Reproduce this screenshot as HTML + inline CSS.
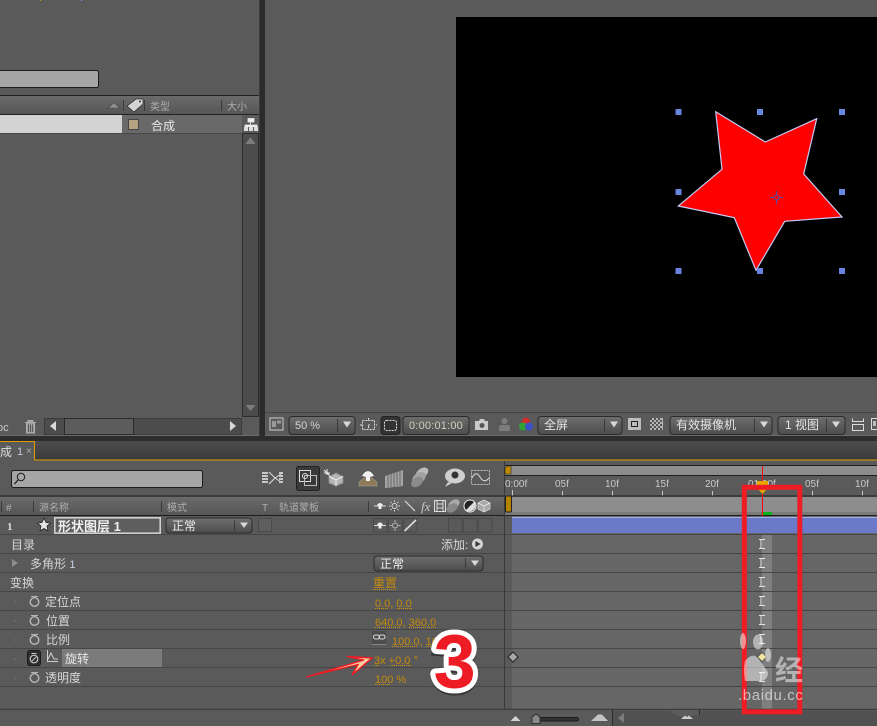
<!DOCTYPE html>
<html><head><meta charset="utf-8">
<style>
html,body{margin:0;padding:0;background:#5a5a5a;width:877px;height:726px;overflow:hidden}
svg{display:block}
text{font-family:"Liberation Sans","WenQuanYi Zen Hei","Noto Sans CJK SC",sans-serif;font-size:12px;fill:#d6d6d6}
.h{font-size:10px;fill:#aeaeae}
.o{fill:#c48a0c}
.r{font-size:10px;fill:#c9c9c9}
.u{stroke:#d09500;stroke-width:1;stroke-dasharray:1 1;fill:none}
.ln{stroke:#464646;stroke-width:1}
.dd{fill:url(#btn);stroke:#2a2a2a;stroke-width:1}
.sep{stroke:#3a3a3a;stroke-width:1}
.tri{fill:#d8d8d8}
.ic{fill:none;stroke:#dcdcdc;stroke-width:1}
.sw{fill:none;stroke:#4a4a4a;stroke-width:1}
</style></head><body>
<svg width="877" height="726" viewBox="0 0 877 726" xmlns="http://www.w3.org/2000/svg">
<defs>
<linearGradient id="btn" x1="0" y1="0" x2="0" y2="1"><stop offset="0" stop-color="#6e6e6e"/><stop offset="1" stop-color="#4c4c4c"/></linearGradient>
<linearGradient id="hd" x1="0" y1="0" x2="0" y2="1"><stop offset="0" stop-color="#6b6b6b"/><stop offset="1" stop-color="#565656"/></linearGradient>
<linearGradient id="tab" x1="0" y1="0" x2="0" y2="1"><stop offset="0" stop-color="#4d4d4d"/><stop offset="1" stop-color="#3b3b3b"/></linearGradient>
<clipPath id="wm"><rect x="730" y="630" width="73" height="56"/></clipPath>
<clipPath id="wm2"><rect x="730" y="680" width="76" height="30"/></clipPath>
</defs>

<rect width="877" height="726" fill="#5a5a5a"/>
<rect x="40" y="0" width="1" height="1" fill="#d09500"/><rect x="81" y="0" width="1" height="1" fill="#7d9cff"/>

<!-- project panel -->
<rect x="-3" y="70.500" width="101.500" height="17" rx="2" fill="#a6a6a6" stroke="#1c1c1c"/>
<rect x="0" y="96" width="259" height="18" fill="url(#hd)"/>
<path d="M0 95.500H259M0 114.500H259" stroke="#222"/>
<path d="M108 108L114 102.500L120 108Z" fill="#8f8f8f" stroke="#444" stroke-width=".6"/>
<path d="M123.500 100V111M144.500 100V111M221.500 100V111" class="sep"/>
<path d="M127 106L136 99H143V104L134 112Z" fill="#d4d4d4" stroke="#333" stroke-width=".8"/>
<circle cx="140" cy="101.500" r="1" fill="#333"/>
<text x="150" y="110" class="h">类型</text>
<text x="227" y="110" class="h">大小</text>
<rect x="0" y="115" width="122" height="18" fill="#d3d3d3"/>
<rect x="122" y="115" width="120" height="18" fill="#696969"/>
<path d="M0 133.500H242" stroke="#484848"/>
<rect x="128.500" y="119.500" width="10" height="10" fill="#b6a381" stroke="#444"/>
<text x="151" y="130" style="font-size:12px;fill:#e8e8e8">合成</text>
<!-- flowchart -->
<path d="M248 118.500H254V122H248ZM250.500 122V125M245 127V125H257V127" fill="#eee" stroke="#eee" stroke-width=".8"/>
<path d="M244 127h4v4h-4zM249 127h4v4h-4zM254 127h4v4h-4z" fill="#ddd"/>
<!-- scrollbar -->
<rect x="242.500" y="133.500" width="16" height="283" fill="#4c4c4c" stroke="#2c2c2c"/>
<path d="M245.500 144L250.500 137L255.500 144Z" fill="#7c7c7c"/>
<path d="M245.500 405L250.500 411L255.500 405Z" fill="#7c7c7c"/>
<rect x="0" y="418" width="259" height="17" fill="#5a5a5a"/>
<rect x="44.500" y="418.500" width="197" height="16" fill="#4c4c4c" stroke="#3a3a3a"/>
<rect x="64.500" y="418.500" width="69" height="16" fill="#5c5c5c" stroke="#2a2a2a"/>
<path d="M56 421V431L50 426Z" fill="#d8d8d8"/>
<path d="M230 421V431L236 426Z" fill="#d8d8d8"/>
<text x="-3" y="431" style="font-size:11px;fill:#c9c9c9">oc</text>
<path d="M25 422.500H36M28 422V420.500H33V422M26.500 423V433H34.500V423" fill="#9c9c9c" stroke="#b0b0b0"/>
<path d="M28.500 424.500V432M30.500 424.500V432M32.500 424.500V432" stroke="#5a5a5a"/>
<path d="M0 435.500H259" stroke="#6c6c6c"/>

<!-- dividers -->
<rect x="260" y="0" width="5" height="436" fill="#2b2b2b"/>
<rect x="259" y="0" width="1" height="436" fill="#3c3c3c"/>
<rect x="0" y="436" width="877" height="5" fill="#2d2d2d"/>

<!-- viewer -->
<rect x="456" y="17" width="421" height="360" fill="#000"/>
<path d="M265 412.500H877" stroke="#444"/>
<path d="M265 435.500H877" stroke="#6a6a6a"/>
<polygon points="715.700,111.700 765.300,142 816.700,118.700 803.700,174 842,217 784.700,221.300 756,270.300 734.300,217.700 678.300,206 722,169.300" fill="#fe0000" stroke="#c4cbf5" stroke-width="1.200"/>
<g fill="#6a82e0">
<rect x="675.500" y="109" width="6" height="6"/><rect x="757" y="109" width="6" height="6"/><rect x="839" y="109" width="6" height="6"/>
<rect x="675.500" y="189" width="6" height="6"/><rect x="839" y="189" width="6" height="6"/>
<rect x="675.500" y="268" width="6" height="6"/><rect x="757" y="268" width="6" height="6"/><rect x="839" y="268" width="6" height="6"/>
</g>
<g fill="none" stroke="#5050b0"><circle cx="776.500" cy="197.500" r="2.500"/><path d="M776.500 191V195M776.500 200V204M770 197.500H774M779 197.500H783"/></g>

<!-- viewer controls -->
<rect x="270" y="418" width="13" height="12" fill="none" stroke="#ccc"/><rect x="272" y="421" width="4" height="6" fill="#999"/><rect x="277" y="420.500" width="4" height="3" fill="#999"/>
<rect x="289" y="416.500" width="66" height="18" rx="3" class="dd"/><path d="M337.500 419V432" class="sep"/>
<text x="295" y="429" style="font-size:11px;fill:#d2d2d2">50 %</text>
<path d="M343 421.500H351L347 427.500Z" class="tri"/>
<rect x="362.500" y="420.500" width="12" height="9" class="ic" stroke-dasharray="2 1"/><path d="M368.500 418V432M360 425H377" stroke="#ddd" stroke-width="1" stroke-dasharray="2 6"/>
<rect x="381" y="416.500" width="19" height="18" rx="3" fill="#333" stroke="#222"/>
<rect x="384.500" y="420.500" width="12" height="10" rx="2" fill="none" stroke="#ddd" stroke-dasharray="2 1"/>
<rect x="403" y="416.500" width="66" height="18" rx="3" class="dd"/>
<text x="409" y="429" style="font-size:11px;fill:#d6d0be;letter-spacing:.2px">0:00:01:00</text>
<path d="M475 421H479L480 419H484L485 421H488V430H475Z" fill="#c9c9c9"/><circle cx="482" cy="425.500" r="2.500" fill="#555"/>
<circle cx="504.500" cy="421" r="3" fill="#7d7d7d"/><path d="M499 431V427Q499 425 502 425H507Q510 425 510 427V431Z" fill="#7d7d7d"/>
<circle cx="526" cy="421.500" r="4" fill="#d02c2c"/><circle cx="523" cy="426.500" r="4" fill="#33a033"/><circle cx="529" cy="426.500" r="4" fill="#3a52c8"/>
<rect x="538" y="416.500" width="84" height="18" rx="3" class="dd"/><path d="M604.500 419V432" class="sep"/>
<text x="544" y="429" style="fill:#e4e4e4">全屏</text><path d="M610 421.500H618L614 427.500Z" class="tri"/>
<rect x="628" y="418" width="13" height="12" fill="#bcbcbc"/><rect x="631.500" y="421.500" width="6" height="5" fill="none" stroke="#222"/>
<rect x="650" y="418" width="13" height="12" fill="#b5b5b5"/><path d="M650 418h2v2h-2zM654 418h2v2h-2zM658 418h2v2h-2zM652 420h2v2h-2zM656 420h2v2h-2zM660 420h2v2h-2zM650 422h2v2h-2zM654 422h2v2h-2zM658 422h2v2h-2zM652 424h2v2h-2zM656 424h2v2h-2zM660 424h2v2h-2zM650 426h2v2h-2zM654 426h2v2h-2zM658 426h2v2h-2zM652 428h2v2h-2zM656 428h2v2h-2zM660 428h2v2h-2z" fill="#555"/>
<rect x="670" y="416.500" width="102" height="18" rx="3" class="dd"/><path d="M754.500 419V432" class="sep"/>
<text x="676" y="429" style="fill:#e4e4e4">有效摄像机</text><path d="M760 421.500H768L764 427.500Z" class="tri"/>
<rect x="778" y="416.500" width="67" height="18" rx="3" class="dd"/><path d="M826.500 419V432" class="sep"/>
<text x="785" y="429" style="fill:#e4e4e4">1 视图</text><path d="M832 421.500H840L836 427.500Z" class="tri"/>
<path d="M852.500 418.500V421.500H863.500V418.500M852.500 430.500H863.500V424.500H852.500Z" class="ic"/>
<rect x="871.500" y="418.500" width="10" height="11" class="ic"/><rect x="873" y="421" width="3" height="5" fill="#bbb"/>

<!-- timeline tabs -->
<rect x="35" y="441" width="842" height="19" fill="url(#tab)"/>
<path d="M0 441.500H34.500V460H877" fill="none" stroke="#e09b00" stroke-width="1"/>
<rect x="0" y="442" width="34" height="19" fill="#5a5a5a"/>
<text x="0" y="456" style="fill:#dedede">成</text>
<text x="17" y="455" style="font-size:11px;fill:#c8c8d8">1</text>
<text x="26" y="454" style="font-size:10px;fill:#b4b4b4">×</text>

<!-- search -->
<rect x="11.500" y="470.500" width="191" height="17" rx="2" fill="#a6a6a6" stroke="#1c1c1c"/>
<circle cx="21" cy="477" r="3.700" fill="none" stroke="#1c1c1c"/><path d="M18 480L14.500 484" stroke="#1c1c1c" stroke-width="1.300"/>

<!-- toolbar icons -->
<g>
<path d="M269 472L275 478L281 474M269 484L275 478L281 482" fill="none" stroke="#dcdcdc"/>
<path d="M262 472h6v2h-6zM262 475h6v2h-6zM262 478h6v2h-6zM262 481h6v2h-6zM279 472h4v2h-4zM279 475h4v2h-4zM279 478h4v2h-4zM279 481h4v2h-4z" fill="#c8c8c8"/>
<rect x="296.500" y="466.500" width="23" height="24" rx="2" fill="#3a3a3a" stroke="#222"/>
<rect x="299.500" y="470.500" width="11" height="11" class="ic"/><rect x="304.500" y="475.500" width="12" height="10" fill="none" stroke="#bbb"/><circle cx="305" cy="476" r="2.500" class="ic"/>
<path d="M324 470L330 476M327 469V475M324 473H330" stroke="#eee"/>
<path d="M336 473L343 476.500V483L336 486L329 483V476.500Z" fill="#b5b5b5" stroke="#888"/><path d="M329 476.500L336 480L343 476.500M336 480V486" fill="none" stroke="#eee"/>
<path d="M359 482L364 478H372L377 482V486H359Z" fill="#8f7a55" stroke="#aaa" stroke-width=".5"/>
<path d="M362 476Q368 466 374 476L370 477V481H366V477Z" fill="#f0f0f0"/>
<path d="M385 476L403 470V486L385 488Z" fill="#a4a4a4"/><path d="M388 475V487M391 474V487M394 473V487M397 472V486M400 471V486" stroke="#5a5a5a" stroke-width=".8"/>
<ellipse cx="422" cy="473" rx="7" ry="4.500" transform="rotate(-35 422 473)" fill="#bbb"/><ellipse cx="419" cy="478" rx="7.500" ry="5" transform="rotate(-35 419 478)" fill="#a2a2a2"/><ellipse cx="417" cy="482" rx="6.500" ry="4.500" transform="rotate(-35 417 482)" fill="#8a8a8a"/>
<ellipse cx="455" cy="476" rx="10" ry="7.500" fill="#cfcfcf"/><circle cx="455" cy="475" r="3.500" fill="#333"/><path d="M448 482L445 487L452 483Z" fill="#cfcfcf"/>
<rect x="471.500" y="470.500" width="18" height="14" fill="none" stroke="#bdbdbd" stroke-dasharray="2 1"/><path d="M472 478Q476 470 480 477T489 478" class="ic"/>
</g>

<!-- header -->
<rect x="0" y="497" width="504" height="18" fill="url(#hd)"/>
<path d="M0 496H877M0 515.500H877" stroke="#1e1e1e"/>
<path d="M1.500 501V512M33.500 501V512M161.500 501V512M368.500 501V512" class="sep"/>
<text x="6" y="511" class="h">#</text>
<text x="39" y="511" class="h">源名称</text>
<text x="167" y="511" class="h">模式</text>
<text x="262" y="511" class="h">T</text>
<text x="279" y="511" class="h">轨道蒙板</text>
<path d="M374 506H386" stroke="#ddd"/><path d="M377 505Q380 501 383 505L381.500 506V509H378.500V506Z" fill="#eee"/>
<circle cx="394.500" cy="506" r="2.500" class="ic"/><path d="M394.500 500.500V502M394.500 510V511.500M389 506H390.500M398.500 506H400M390.500 502L391.500 503M397.500 509L398.500 510M390.500 510L391.500 509M397.500 503L398.500 502" stroke="#ddd"/>
<path d="M405 501L415 511" stroke="#ccc" stroke-width="1.300"/>
<text x="421" y="511" style="font:italic 13px 'Liberation Serif',serif;fill:#c8c8c8">fx</text>
<rect x="434.500" y="500.500" width="11" height="11" class="ic"/><path d="M437 500V512M443 500V512M437 504H443M437 508H443" stroke="#ddd"/>
<ellipse cx="454" cy="504" rx="6" ry="4" transform="rotate(-30 454 504)" fill="#aaa"/><ellipse cx="452" cy="508" rx="6" ry="4" transform="rotate(-30 452 508)" fill="#888"/>
<circle cx="470" cy="506" r="6" fill="#222" stroke="#eee"/><path d="M474.200 501.800A6 6 0 0 1 465.800 510.200Z" fill="#ddd"/>
<path d="M484 500L490 503V509L484 512L478 509V503Z" fill="#a8a8a8" stroke="#ddd" stroke-width=".7"/><path d="M478 503L484 506L490 503M484 506V512" fill="none" stroke="#eee" stroke-width=".7"/>

<!-- row area -->
<rect x="512" y="516" width="365" height="193" fill="#666"/>
<rect x="504" y="516" width="8" height="193" fill="#5a5a5a"/>
<rect x="762" y="534" width="10" height="175" fill="#7f7f7f"/>
<path class="ln" d="M0 534.500H877M0 553.500H877M0 572.500H877M0 591.500H877M0 610.500H877M0 629.500H877M0 648.500H877M0 667.500H877M0 686.500H877"/>
<path d="M504.500 461V709" stroke="#3a3a3a"/>
<path d="M0 709.500H877" stroke="#3c3c3c" stroke-width="1.500"/>

<!-- ruler -->
<rect x="505" y="466" width="372" height="9" fill="#8d8d8d"/>
<path d="M505 470Q505 466 509 466H511V474H505Z" fill="#c08a00" stroke="#222" stroke-width=".6"/>
<path d="M505 465.500H877M505 475.500H877" stroke="#1e1e1e"/>
<rect x="505" y="476" width="372" height="20" fill="#5a5a5a"/>
<text x="505" y="487" class="r">0:00f</text>
<text x="555" y="487" class="r">05f</text>
<text x="605" y="487" class="r">10f</text>
<text x="655" y="487" class="r">15f</text>
<text x="705" y="487" class="r">20f</text>
<text x="748" y="487" class="r">01:00f</text>
<text x="805" y="487" class="r">05f</text>
<text x="855" y="487" class="r">10f</text>
<path d="M512.500 490V496M562.500 491V496M612.500 491V496M662.500 491V496M712.500 491V496M812.500 491V496M862.500 491V496" stroke="#c4c4c4"/>
<rect x="505" y="497" width="372" height="18" fill="#8d8d8d"/>
<rect x="505" y="512" width="372" height="3" fill="#7a7a7a"/>
<path d="M505 515.500H877M505 496H877" stroke="#1e1e1e"/>
<rect x="505.500" y="496" width="6" height="16" rx="1" fill="#b88400" stroke="#222"/>
<rect x="763" y="512" width="9" height="3" fill="#0ab31a"/>
<rect x="512" y="517" width="365" height="16" fill="#6b79c9"/>
<path d="M512 517.500H877" stroke="#a6aee0"/>
<path d="M762.500 466V516" stroke="#f00"/>
<path d="M757 481H768V488L762.500 494L757 488Z" fill="#eba300"/>

<!-- I-beams -->
<g fill="none" stroke="#e6e6e6">
<path d="M759 539.500H761V548.500H759M761 539.500H765M761 548.500H765"/>
<path d="M759 558.500H761V567.500H759M761 558.500H765M761 567.500H765"/>
<path d="M759 577.500H761V586.500H759M761 577.500H765M761 586.500H765"/>
<path d="M759 596.500H761V605.500H759M761 596.500H765M761 605.500H765"/>
<path d="M759 615.500H761V624.500H759M761 615.500H765M761 624.500H765"/>
<path d="M759 634.500H761V643.500H759M761 634.500H765M761 643.500H765"/>
<path d="M759 672.500H761V681.500H759M761 672.500H765M761 681.500H765"/>
</g>

<!-- row 1 -->
<text x="7" y="530" style="font:bold 11px 'Liberation Serif',serif;fill:#dcdcdc">1</text>
<path d="M44 518L46 522.500L50.500 523L47 526L48 531L44 528.500L40 531L41 526L37.500 523L42 522.500Z" fill="#e6e6e6" stroke="#222" stroke-width=".8"/>
<rect x="54.800" y="517.800" width="105.400" height="15.400" fill="#5e5e5e" stroke="#cfcfcf" stroke-width="1.600"/>
<text x="58" y="531" style="font-size:13px;font-weight:bold;fill:#f0f0f0">形状图层 1</text>
<rect x="166" y="518" width="86" height="15" rx="3" class="dd"/><path d="M234.500 520V531" class="sep"/>
<text x="172" y="530" style="fill:#eee">正常</text><path d="M240 522.500H248L244 528Z" class="tri"/>
<rect x="258.500" y="518.500" width="13" height="13" fill="#5f5f5f" stroke="#4a4a4a"/>
<rect class="sw" x="373.500" y="518.500" width="13.500" height="13.500"/><rect class="sw" x="388.500" y="518.500" width="13.500" height="13.500"/><rect class="sw" x="403.500" y="518.500" width="13.500" height="13.500"/>
<rect class="sw" x="448.500" y="518.500" width="13.500" height="13.500"/><rect class="sw" x="463.500" y="518.500" width="13.500" height="13.500"/><rect class="sw" x="478.500" y="518.500" width="13.500" height="13.500"/>
<path d="M374 525.500H386" stroke="#ddd"/><path d="M377 524.500Q380 520.500 383 524.500L381.500 525.500V528.500H378.500V525.500Z" fill="#eee"/>
<circle cx="395" cy="525.500" r="2.500" fill="none" stroke="#bbb"/><path d="M395 520V522M395 529V531M389.500 525.500H391.500M398.500 525.500H400.500" stroke="#bbb"/>
<path d="M404.500 531L416 520" stroke="#ddd" stroke-width="1.600"/>

<!-- row labels -->
<text x="11" y="549">目录</text>
<text x="441" y="549">添加:</text>
<circle cx="477.500" cy="544" r="5.500" fill="#d4d4d4"/><path d="M475.500 541V547L480.500 544Z" fill="#333"/>
<path d="M12 559V567L18 563Z" fill="#8c8c8c"/>
<text x="30" y="568">多角形 <tspan style="fill:#c8d0e0;font-size:11px">1</tspan></text>
<rect x="374" y="556" width="109" height="15" rx="3" class="dd"/><path d="M465.500 558V569" class="sep"/>
<text x="380" y="568" style="fill:#eee">正常</text><path d="M471 560.500H479L475 566Z" class="tri"/>
<text x="10" y="587">变换</text>
<text x="373" y="587" class="o">重置</text><path class="u" d="M373 589.500H396"/>

<g fill="none" stroke="#b8b8b8">
<circle cx="34.500" cy="602" r="4.300" stroke-width="1.400"/><path d="M31 596.500H38"/>
<circle cx="34.500" cy="621" r="4.300" stroke-width="1.400"/><path d="M31 615.500H38"/>
<circle cx="34.500" cy="640" r="4.300" stroke-width="1.400"/><path d="M31 634.500H38"/>
<circle cx="34.500" cy="678" r="4.300" stroke-width="1.400"/><path d="M31 672.500H38"/>
</g>
<g fill="#666"><rect x="14" y="601" width="2" height="2"/><rect x="14" y="620" width="2" height="2"/><rect x="14" y="639" width="2" height="2"/><rect x="14" y="658" width="2" height="2"/><rect x="14" y="677" width="2" height="2"/></g>
<text x="45" y="606">定位点</text>
<text x="46" y="625">位置</text>
<text x="46" y="644">比例</text>
<rect x="27.500" y="650.500" width="13" height="15" rx="2" fill="#2e2e2e" stroke="#1c1c1c"/>
<circle cx="34" cy="659" r="3.800" fill="none" stroke="#c8c8c8" stroke-width="1.200"/><path d="M31.500 653.500H36.500M32 661L36 657" stroke="#c8c8c8"/>
<path d="M47.500 650V661.500H58M48 659L51 653L54 659H58" fill="none" stroke="#d0d0d0"/>
<rect x="62" y="649" width="100" height="18" fill="#7b7b7b"/>
<text x="65" y="663" style="fill:#e8e8e8">旋转</text>
<text x="45" y="682">透明度</text>

<!-- values -->
<text x="375" y="607" class="o" style="font-size:11px">0.0, 0.0</text><path class="u" d="M375 608.500H389M397 608.500H412"/>
<text x="375" y="626" class="o" style="font-size:11px">640.0, 360.0</text><path class="u" d="M375 627.500H401M409 627.500H436"/>
<rect x="372" y="631" width="14" height="14" fill="#4c4c4c"/><path d="M372 644.500H386" stroke="#888"/>
<rect x="373.500" y="635" width="6" height="4" rx="2" fill="none" stroke="#ddd"/><rect x="379" y="635" width="6" height="4" rx="2" fill="none" stroke="#ddd"/>
<text x="392" y="645" class="o" style="font-size:11px">100.0, 10</text><path class="u" d="M392 646.500H418M426 646.500H440"/>
<text x="374" y="664" class="o" style="font-size:11px">3x +0.0 °</text><path class="u" d="M374 665.500H380M390 665.500H412"/>
<text x="375" y="683" class="o" style="font-size:11px">100 %</text><path class="u" d="M375 684.500H391"/>

<!-- keyframes -->
<path d="M513 652L518 657L513 662L508 657Z" fill="#a8a8a8" stroke="#222"/>
<path d="M762 652.500L766.500 657L762 661.500L757.500 657Z" fill="#f2e6a0" stroke="#333" stroke-width=".6"/>

<!-- bottom bar -->
<rect x="0" y="710" width="877" height="16" fill="#5a5a5a"/>
<path d="M510.500 721L515.500 716L520.500 721Z" fill="#d4d4d4"/>
<rect x="536" y="717.500" width="42.500" height="3.500" rx="1.700" fill="#333" stroke="#1c1c1c"/>
<path d="M532 723.500V717L536 714L540 717V723.500Z" fill="#8a8a8a" stroke="#222" stroke-width=".8"/>
<path d="M591 721L598 714.500H602L608 721Z" fill="#c4c4c4"/>
<rect x="613" y="711" width="264" height="15" fill="#515151"/>
<path d="M612.500 710V726" stroke="#2c2c2c"/>
<path d="M624 713V723L618 718Z" fill="#7c7c7c"/>
<path d="M669 710Q678 719 690 716L699.500 715V710Z" fill="#5c5c5c"/>
<path d="M699.500 710V715" stroke="#2c2c2c"/>
<path d="M681 719L685 715.500L687 717L689 715.500L693 719Z" fill="#ccc"/>

<!-- annotation -->
<rect x="744.300" y="487.300" width="55.500" height="224.500" fill="none" stroke="#ee1c25" stroke-width="5"/>
<path d="M306 677L364 660L347 656.500L372 658L352 675L358 664.500Z" fill="#f5cfa0" stroke="#ee1c25" stroke-width="1.400"/>
<text x="433.500" y="690" style="font:bold 76px 'Liberation Sans',sans-serif;fill:#000;opacity:.4" stroke="#000" stroke-width="9">3</text>
<text x="433.500" y="687.500" style="font:bold 76px 'Liberation Sans',sans-serif;fill:#ee1c25;paint-order:stroke" stroke="#fff" stroke-width="10" stroke-linejoin="round">3</text>

<!-- watermark -->
<g clip-path="url(#wm)" fill="#fff" opacity=".5">
<ellipse cx="743" cy="641" rx="3" ry="8"/>
<ellipse cx="758" cy="642" rx="5" ry="7.500"/>
<ellipse cx="768" cy="655" rx="3" ry="7"/>
<path d="M745 661Q752 652 758 658L768 672Q768 682 757 681H745Q743 670 745 661Z"/>
</g>
<text x="775" y="680" clip-path="url(#wm)" style="font-size:28px;font-weight:bold;fill:#fff;opacity:.5">经</text>
<text x="738" y="700" clip-path="url(#wm2)" style="font-size:15px;letter-spacing:.6px;fill:#fff;opacity:.6">.baidu.cc</text>
</svg>
</body></html>
